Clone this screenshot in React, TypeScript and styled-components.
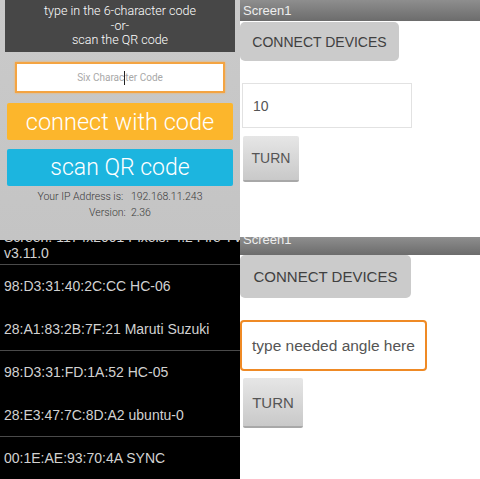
import React from 'react'
import styled, { createGlobalStyle } from 'styled-components'

const devices = [
  { mac: '98:D3:31:40:2C:CC', name: 'HC-06' },
  { mac: '28:A1:83:2B:7F:21', name: 'Maruti Suzuki' },
  { mac: '98:D3:31:FD:1A:52', name: 'HC-05' },
  { mac: '28:E3:47:7C:8D:A2', name: 'ubuntu-0' },
  { mac: '00:1E:AE:93:70:4A', name: 'SYNC' },
]

const App = () => {
  return (
    <>
      <GlobalStyle />
      <Collage>
        <Column>
          <CodePanel>
            <Prompt>
              type in the 6-character code
              <br />
              -or-
              <br />
              scan the QR code
            </Prompt>
            <CodeInput>
              Six Charac
              <Caret />
              ter Code
            </CodeInput>
            <BigButton $bg="#fcb62c" $size={23.5}>connect with code</BigButton>
            <BigButton $bg="#1cb5df" $size={23} $gap={9}>scan QR code</BigButton>
            <Info>
              Your IP Address is:&nbsp;&nbsp; 192.168.11.243
              <br />
              Version:&nbsp;&nbsp;2.36
            </Info>
          </CodePanel>
          <DeviceList>
            <ListHead>
              <div>Screen: 1174x2001 Pixels: 4.2 Fire TV</div>
              <div>v3.11.0</div>
            </ListHead>
            {devices.map((d, i) => (
              <DeviceRow key={d.mac} $line={i % 2 === 1}>
                {d.mac} {d.name}
              </DeviceRow>
            ))}
          </DeviceList>
        </Column>
        <Column>
          <ScreenPanel $h={237}>
            <TitleBar $h={21}>Screen1</TitleBar>
            <ConnectButton $w={159} $h={39} $size={14} $top={1}>CONNECT DEVICES</ConnectButton>
            <AngleInput $w={170} $h={45} $size={14}>10</AngleInput>
            <TurnButton $w={56} $h={46} $top={8} $size={14}>TURN</TurnButton>
          </ScreenPanel>
          <ScreenPanel $h={242}>
            <TitleBar $h={18} $clip>Screen1</TitleBar>
            <ConnectButton $w={171} $h={43} $size={15}>CONNECT DEVICES</ConnectButton>
            <AngleInput $w={187} $h={51} $size={15.5} $focus>type needed angle here</AngleInput>
            <TurnButton $w={60} $h={50} $top={7} $size={15}>TURN</TurnButton>
          </ScreenPanel>
        </Column>
      </Collage>
    </>
  )
}

export default App

const GlobalStyle = createGlobalStyle`
html, body {
  margin: 0;
  padding: 0;
  background: #fff;
}
body {
  font-family: Roboto, "Liberation Sans", sans-serif;
}
`

const Collage = styled.div`
display: flex;
width: 480px;
height: 479px;
overflow: hidden;
`

const Column = styled.div`
display: flex;
flex-direction: column;
width: 240px;
`

const CodePanel = styled.div`
height: 240px;
flex: none;
box-sizing: border-box;
padding: 0 5px;
background: linear-gradient(#cacaca, #c4c4c4);
display: flex;
flex-direction: column;
`

const Prompt = styled.div`
height: 52px;
flex: none;
box-sizing: border-box;
padding-top: 4px;
background: #474747;
color: #fff;
font-size: 12.5px;
font-weight: 300;
line-height: 14.5px;
text-align: center;
`

const CodeInput = styled.div`
margin: 10px 10px 0;
height: 31px;
flex: none;
box-sizing: border-box;
border: 2px solid #f4a442;
box-shadow: 0 0 2px #f7b35a;
background: #fff;
color: #a8a8a8;
font-size: 10px;
display: flex;
align-items: center;
justify-content: center;
`

const Caret = styled.span`
display: inline-block;
width: 1px;
height: 14px;
background: #222;
`

const BigButton = styled.div<{ $bg: string; $size: number; $gap?: number }>`
margin: ${p => p.$gap ?? 10}px 2px 0;
height: 37px;
flex: none;
border-radius: 2px;
background: ${p => p.$bg};
color: #fff;
font-size: ${p => p.$size}px;
font-weight: 300;
display: flex;
align-items: center;
justify-content: center;
`

const Info = styled.div`
margin-top: 3px;
color: #3a3a3a;
font-size: 10.5px;
font-weight: 300;
line-height: 16px;
text-align: center;
`

const DeviceList = styled.div`
height: 239px;
flex: none;
overflow: hidden;
background: #000;
color: #d2d2d2;
font-family: "Liberation Sans", Arial, sans-serif;
font-size: 14px;
`

const ListHead = styled.div`
margin-top: -11px;
padding: 0 4px 3px;
line-height: 16px;
border-bottom: 1px solid #4a4a4a;
white-space: nowrap;
`

const DeviceRow = styled.div<{ $line: boolean }>`
height: 43px;
box-sizing: border-box;
padding: 0 4px;
display: flex;
align-items: center;
white-space: nowrap;
border-bottom: 1px solid ${p => (p.$line ? '#4a4a4a' : 'transparent')};
`

const ScreenPanel = styled.div<{ $h: number }>`
height: ${p => p.$h}px;
flex: none;
overflow: hidden;
background: #fff;
display: flex;
flex-direction: column;
align-items: flex-start;
font-family: "Liberation Sans", Arial, sans-serif;
`

const TitleBar = styled.div<{ $h: number; $clip?: boolean }>`
align-self: stretch;
height: ${p => p.$h}px;
flex: none;
box-sizing: border-box;
padding-left: 3px;
overflow: hidden;
background: linear-gradient(#8e8e8e, #6c6c6c);
color: #eee;
font-size: 13px;
line-height: ${p => (p.$clip ? '6px' : '21px')};
`

const ConnectButton = styled.div<{ $w: number; $h: number; $size: number; $top?: number }>`
margin-top: ${p => p.$top ?? 0}px;
width: ${p => p.$w}px;
height: ${p => p.$h}px;
flex: none;
border-radius: 5px;
background: #cbcbcb;
color: #404040;
font-size: ${p => p.$size}px;
display: flex;
align-items: center;
justify-content: center;
`

const AngleInput = styled.div<{ $w: number; $h: number; $size: number; $focus?: boolean }>`
margin: 22px 0 0 ${p => (p.$focus ? 0 : 2)}px;
width: ${p => p.$w}px;
height: ${p => p.$h}px;
flex: none;
box-sizing: border-box;
padding-left: 10px;
border: ${p => (p.$focus ? '2px solid #ef8a25' : '1px solid #e2e2e2')};
border-radius: ${p => (p.$focus ? 4 : 0)}px;
background: #fff;
color: #555;
font-size: ${p => p.$size}px;
display: flex;
align-items: center;
white-space: nowrap;
overflow: hidden;
`

const TurnButton = styled.div<{ $w: number; $h: number; $top: number; $size: number }>`
margin: ${p => p.$top}px 0 0 3px;
width: ${p => p.$w}px;
height: ${p => p.$h}px;
flex: none;
box-sizing: border-box;
border-radius: 2px;
border-bottom: 2px solid #a8a8a8;
background: linear-gradient(#e6e6e6, #c9c9c9);
color: #555;
font-size: ${p => p.$size}px;
display: flex;
align-items: center;
justify-content: center;
`
